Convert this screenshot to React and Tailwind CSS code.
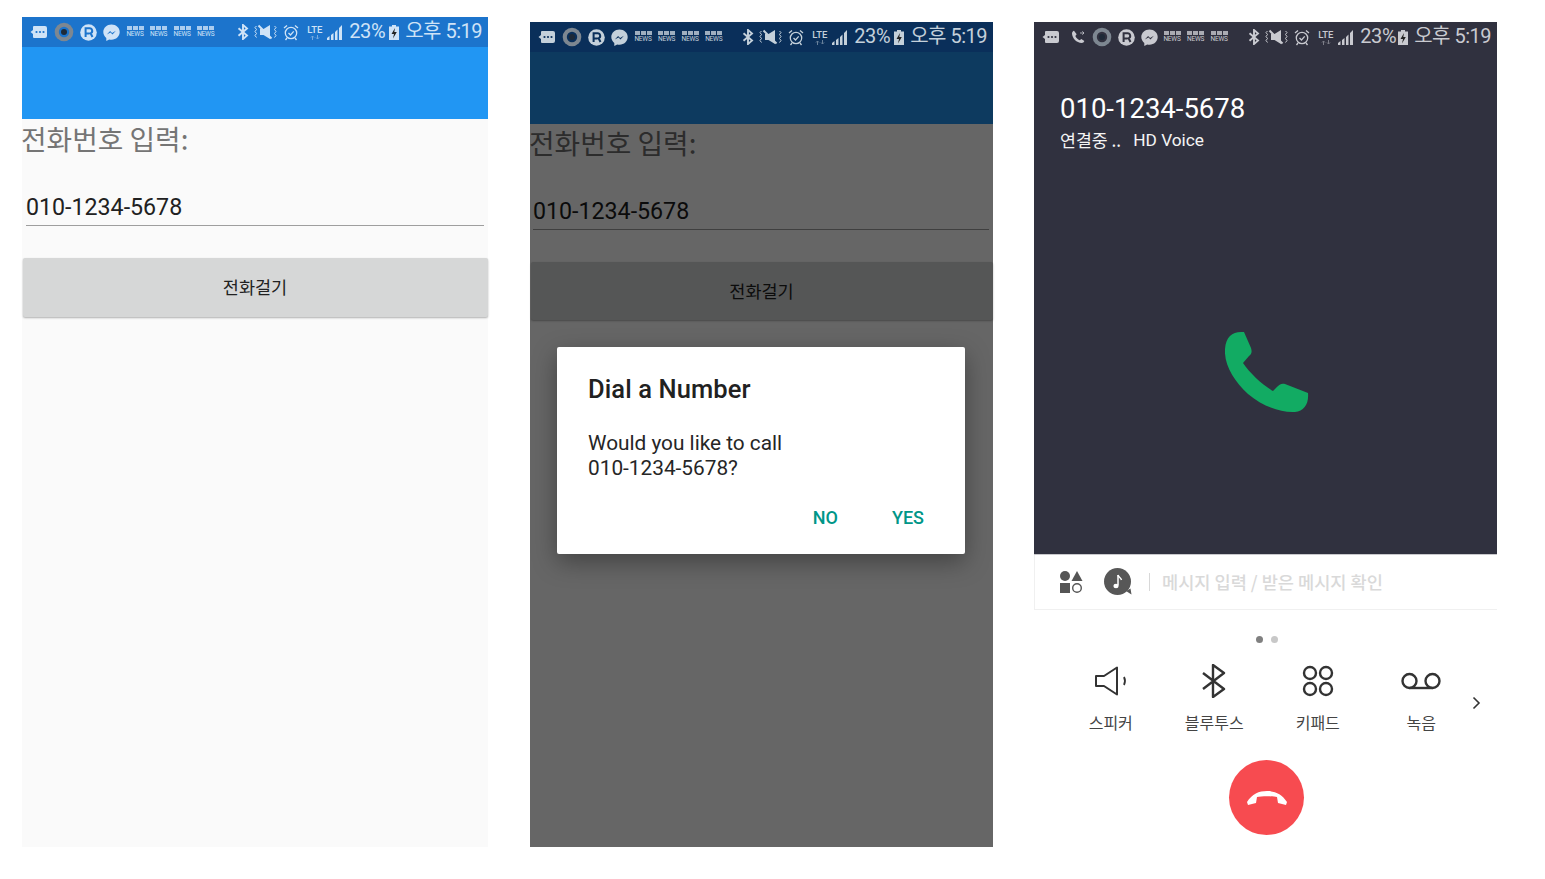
import React from "react";

const F = "font-['Roboto','Noto_Sans_CJK_KR',sans-serif]";
const K = "font-['Noto_Sans_CJK_KR','Roboto',sans-serif]";

function Bbc({ c }) {
  return (
    <div className="flex flex-col items-center w-[18px] leading-none shrink-0" style={{ color: c }}>
      <div className="flex gap-[1px]">
        <span className="w-[5px] h-[4px] bg-current opacity-80" />
        <span className="w-[5px] h-[4px] bg-current opacity-80" />
        <span className="w-[5px] h-[4px] bg-current opacity-80" />
      </div>
      <span className={`${F} text-[6.5px] leading-[7px] mt-[1px] tracking-[-0.2px]`}>NEWS</span>
    </div>
  );
}

function Chat({ c, bg }) {
  return (
    <svg width="18" height="14" viewBox="0 0 18 14" className="shrink-0">
      <path d="M4 1h11a2 2 0 0 1 2 2v8a2 2 0 0 1-2 2H4a1 1 0 0 1-1-1V9L.5 7 3 5V2a1 1 0 0 1 1-1z" fill={c} />
      <circle cx="6.5" cy="7" r="1.1" fill={bg} />
      <circle cx="10" cy="7" r="1.1" fill={bg} />
      <circle cx="13.5" cy="7" r="1.1" fill={bg} />
    </svg>
  );
}

function Rec({ bg }) {
  return (
    <svg width="20" height="20" viewBox="0 0 20 20" className="shrink-0">
      <circle cx="10" cy="10" r="9.3" fill="#7d8791" />
      <circle cx="10" cy="10" r="5.2" fill={bg} />
      <circle cx="10" cy="10" r="3" fill="#1e2a38" />
    </svg>
  );
}

function RIcon({ c, bg }) {
  return (
    <svg width="17" height="17" viewBox="0 0 17 17" className="shrink-0">
      <circle cx="8.5" cy="8.5" r="8.3" fill={c} />
      <path d="M5.6 13V4.3h4a2.6 2.6 0 0 1 1 5l1.9 3.7M5.6 9.4h4" fill="none" stroke={bg} strokeWidth="2" />
    </svg>
  );
}

function Messenger({ c, bg }) {
  return (
    <svg width="17" height="17" viewBox="0 0 17 17" className="shrink-0">
      <path d="M8.5.4C3.9.4.3 3.8.3 8c0 2.400 1.200 4.500 3 5.900V17l2.900-1.600c.7.2 1.500.3 2.300.3 4.600 0 8.200-3.400 8.200-7.700S13.100.4 8.500.4z" fill={c} />
      <path d="M3.800 10.500l3.300-3.600 2 2 3.800-2.100-3.400 3.700-2-2.100z" fill={bg} />
    </svg>
  );
}

function BluetoothSmall({ c }) {
  return (
    <svg width="12" height="16" viewBox="0 0 12 16" className="shrink-0">
      <path d="M1.500 4.300l8.500 7.300L6 15V1l4 3.400L1.500 11.800" fill="none" stroke={c} strokeWidth="1.900" />
    </svg>
  );
}

function Mute({ c }) {
  return (
    <svg width="23" height="16" viewBox="0 0 23 16" className="shrink-0">
      <path d="M6 5h3.500L16 1v14L9.500 11H6z" fill={c} />
      <path d="M4.500 1.500L17.500 14.500" stroke={c} strokeWidth="2" />
      <path d="M2.500 2L1 3.500l1.500 2L1 7.500l1.500 2L1 11.500l1.500 2M20.500 2L22 3.500l-1.500 2 1.500 2-1.500 2 1.500 2-1.500 2" fill="none" stroke={c} strokeWidth="1" />
    </svg>
  );
}

function Alarm({ c }) {
  return (
    <svg width="16" height="17" viewBox="0 0 16 17" className="shrink-0">
      <circle cx="8" cy="9" r="5.700" fill="none" stroke={c} strokeWidth="1.300" />
      <path d="M5.500 9l2 2 3.200-3.600" fill="none" stroke={c} strokeWidth="1.300" />
      <path d="M1 4l3-2.600M15 4l-3-2.600M4 14l-1.500 2M12 14l1.500 2" stroke={c} strokeWidth="1.300" fill="none" />
    </svg>
  );
}

function Lte({ c }) {
  return (
    <div className="flex flex-col items-center w-[17px] shrink-0" style={{ color: c }}>
      <span className={`${F} text-[9.5px] leading-[10px] font-medium`}>LTE</span>
      <svg width="10" height="5" viewBox="0 0 10 5" className="opacity-50">
        <path d="M2.500 5V1M1 2.500L2.500 1 4 2.500M7.500 0v4M6 2.500L7.500 4 9 2.500" fill="none" stroke={c} strokeWidth="1" />
      </svg>
    </div>
  );
}

function Signal({ c }) {
  return (
    <svg width="16" height="16" viewBox="0 0 16 16" className="shrink-0">
      <path d="M0 16v-2l2.500-2v4zM4 16v-5l2.500-2v7zM8 16V8l2.500-2.500V16zM12 16V4l3-3v15z" fill={c} />
    </svg>
  );
}

function Battery({ c }) {
  return (
    <svg width="10" height="15" viewBox="0 0 10 15" className="shrink-0">
      <rect x="3" y="0" width="4" height="2" fill={c} />
      <rect x="0" y="1.500" width="10" height="13.500" fill={c} />
      <path d="M6 3L2.500 9H5l-1 4.500L7.800 7H5.300z" fill="#222" />
    </svg>
  );
}

function StatusBar({ bg, fg, call, bbc }) {
  return (
    <div className="h-[30px] flex items-center shrink-0" style={{ background: bg }}>
      <div className="ml-[8px] flex items-center gap-[6px]">
        <Chat c={fg} bg={bg} />
        {call && (
          <svg width="16" height="16" viewBox="0 0 24 24" className="ml-[4px] shrink-0">
            <path d="M6 2.500c-1.500.5-3 2-3 4 0 7.500 7 14.500 14.500 14.500 2 0 3.500-1.500 4-3l-4.500-3-2.500 2c-3-1.500-5-3.500-6.500-6.500l2-2.500z" fill={fg} />
            <path d="M15 6h6M18.500 3.500L21 6l-2.500 2.500" fill="none" stroke={fg} strokeWidth="1.200" />
          </svg>
        )}
        <Rec bg={bg} />
        <RIcon c={fg} bg={bg} />
        <Messenger c={fg} bg={bg} />
      </div>
      <div className={`${call ? "ml-[5px]" : "ml-[6px]"} flex items-center gap-[5.600px]`}>
        {Array.from({ length: bbc }).map((_, i) => (
          <Bbc key={i} c={fg} />
        ))}
      </div>
      <div className="ml-auto mr-[6px] flex items-center">
        <BluetoothSmall c={fg} />
        <span className="ml-[5px]"><Mute c={fg} /></span>
        <span className="ml-[6px]"><Alarm c={fg} /></span>
        <span className="ml-[7px]"><Lte c={fg} /></span>
        <span className="ml-[4px]"><Signal c={fg} /></span>
        <span className={`${F} ml-[6px] pb-[2px] text-[20px] leading-none tracking-[-0.4px]`} style={{ color: fg }}>23%</span>
        <span className={call ? "ml-[2px]" : "ml-[4px]"}><Battery c={fg} /></span>
        <span className={`${F} text-[20px] pb-[2px] leading-none ml-[6px] tracking-[-0.5px]`} style={{ color: fg }}>오후 5:19</span>
      </div>
    </div>
  );
}

function FormContent({ dim }) {
  return (
    <div className={`flex flex-col flex-1 ${dim ? "-mt-[1px]" : ""}`}>
      <div className={`h-[37px] flex items-center text-[27.800px] leading-none ${K}`} style={{ color: dim ? "#2c2c2c" : "#757575" }}>
        <span className="-ml-[1px] mt-[3px]">전화번호 입력:</span>
      </div>
      <div
        className={`${dim ? "ml-[3px]" : "ml-[4px]"} mr-[4px] mt-[31px] h-[39px] flex items-center border-b-[1.500px]`}
        style={{ borderColor: dim ? "#3f3f3f" : "#9e9e9e" }}
      >
        <span className={`${F} text-[23.200px] leading-none pt-[3px]`} style={{ color: dim ? "#0b0b0b" : "#212121" }}>010-1234-5678</span>
      </div>
      <div
        className={`mt-[32px] mx-[0.500px] ${dim ? "h-[58px]" : "h-[59px]"} rounded-[2px] flex items-center justify-center text-[17.500px] ${K}`}
        style={{
          background: dim ? "#555656" : "#d6d7d7",
          color: dim ? "#0c0c0c" : "#212121",
          boxShadow: "0 1px 2px rgba(0,0,0,.3)",
        }}
      >
        전화걸기
      </div>
    </div>
  );
}

function IconBtn({ label, children }) {
  return (
    <div className="w-[103.500px] flex flex-col items-center">
      <div className="h-[38px] flex items-center justify-center">{children}</div>
      <span className={`${K} mt-[12px] text-[16px] leading-[20px] text-[#444]`}>{label}</span>
    </div>
  );
}

export default function App() {
  return (
    <div className="w-[1545px] h-[879px] bg-white flex items-end pb-[32px] pl-[22px] overflow-hidden">
      {/* Panel 1 */}
      <div className="w-[466px] h-[830px] bg-[#fafafa] flex flex-col">
        <StatusBar bg="#1c74cc" fg="#cfe3f7" bbc={4} />
        <div className="h-[72px] bg-[#2196f3] shrink-0" />
        <FormContent />
      </div>

      {/* Panel 2 */}
      <div className="relative ml-[42px] w-[463px] h-[825px] bg-[#666666] flex flex-col">
        <StatusBar bg="#0a2f5a" fg="#c4d0da" bbc={4} />
        <div className="h-[72px] bg-[#0d3a5f] shrink-0 relative z-10" />
        <FormContent dim />
        <div className="absolute z-20 left-[27px] top-[325px] w-[408px] h-[207px] bg-white rounded-[2px] shadow-[0_8px_24px_rgba(0,0,0,0.35)]">
          <div className={`${F} pl-[31px] pt-[27px] text-[25.500px] leading-[30px] font-medium text-[#212121] tracking-[0.1px]`}>Dial a Number</div>
          <div className={`${F} pl-[31px] pt-[27px] text-[20.800px] leading-[25px] text-[#262626]`}>
            <div>Would you like to call</div>
            <div>010-1234-5678?</div>
          </div>
          <div className={`${F} flex justify-end gap-[54px] pr-[41px] pt-[25px] text-[18px] leading-[24px] font-medium text-[#009688]`}>
            <span>NO</span>
            <span>YES</span>
          </div>
        </div>
      </div>

      {/* Panel 3 */}
      <div className="ml-[41px] w-[463px] h-[825px] bg-white flex flex-col">
        <StatusBar bg="#30313f" fg="#c9cad0" bbc={3} call />
        <div className="h-[503px] bg-[#30313f] flex flex-col border-b border-[#c8c8cc] shrink-0">
          <div className={`${F} pl-[26px] pt-[38px] text-[27.500px] leading-[38px] text-white`}>010-1234-5678</div>
          <div className="pl-[26px] text-[17.300px] leading-[24px] text-[#f4f4f4] flex">
            <span className={K}>연결중 ..</span>
            <span className={`${F} ml-[12px]`}>HD Voice</span>
          </div>
          <div className="flex-1 flex items-center justify-center pt-[38px] pl-[2px]">
            <svg width="84" height="82" viewBox="0 0 84 82">
              <path
                d="M16 1 C7 1 1 6 0 18 C-1 34 9 50 23 63 C37 75 56 82 70 81 C79 80 84 73 83 62 L60 53 C57 52 54 53 50 58 L48 60 C36 53 25 42 18 32 L24 25 C27 23 27 20 26 17 L19 1 Z"
                fill="#12ab63"
              />
            </svg>
          </div>
        </div>
        <div className="h-[55px] flex items-center border-b border-l border-[#f0f0f0] shrink-0">
          <svg width="24" height="24" viewBox="0 0 24 24" className="ml-[24px] shrink-0">
            <circle cx="6" cy="6" r="5" fill="#555" />
            <path d="M12.500 11L18 1l5.500 10z" fill="#555" />
            <rect x="1" y="13" width="10" height="10" fill="#555" />
            <circle cx="18" cy="18" r="4.300" fill="none" stroke="#555" strokeWidth="1.400" />
          </svg>
          <svg width="28" height="28" viewBox="0 0 28 28" className="ml-[21px] shrink-0">
            <circle cx="13.500" cy="13.500" r="13.500" fill="#575757" />
            <path d="M22 23l5.500 3.500-1-6z" fill="#575757" />
            <path d="M14 7v10.500" stroke="#fff" strokeWidth="1.500" />
            <ellipse cx="12" cy="18" rx="2.600" ry="2.200" fill="#fff" />
            <path d="M14 7c.5 2.500 3 2.500 3.500 5" fill="none" stroke="#fff" strokeWidth="1.500" />
          </svg>
          <span className="ml-[17px] h-[18px] w-[1px] bg-[#d8d8d8]" />
          <span className={`${K} ml-[12px] text-[17.600px] font-medium text-[#d9d9d9]`}>메시지 입력 / 받은 메시지 확인</span>
        </div>
        <div className="flex justify-center gap-[8px] pt-[26px] pl-[2px]">
          <span className="w-[7px] h-[7px] rounded-full bg-[#808080]" />
          <span className="w-[7px] h-[7px] rounded-full bg-[#c8c8c8]" />
        </div>
        <div className="relative flex pl-[25px] pt-[19px]">
          <IconBtn label="스피커">
            <svg width="34" height="30" viewBox="0 0 34 30" className="ml-[3px]">
              <path d="M1 10h8l13-8.500v27L9 20H1z" fill="none" stroke="#333" strokeWidth="2" strokeLinejoin="round" />
              <path d="M29 11c1.500 3 1.500 5 0 8" fill="none" stroke="#333" strokeWidth="1.800" />
            </svg>
          </IconBtn>
          <IconBtn label="블루투스">
            <svg width="26" height="34" viewBox="0 0 26 34">
              <path d="M2 9l21 16-11 8V1l11 8L2 25" fill="none" stroke="#333" strokeWidth="2.400" strokeLinejoin="round" />
            </svg>
          </IconBtn>
          <IconBtn label="키패드">
            <svg width="32" height="32" viewBox="0 0 32 32">
              <circle cx="8" cy="8" r="6" fill="none" stroke="#333" strokeWidth="2.400" />
              <circle cx="24" cy="8" r="6" fill="none" stroke="#333" strokeWidth="2.400" />
              <circle cx="8" cy="24" r="6" fill="none" stroke="#333" strokeWidth="2.400" />
              <circle cx="24" cy="24" r="6" fill="none" stroke="#333" strokeWidth="2.400" />
            </svg>
          </IconBtn>
          <IconBtn label="녹음">
            <svg width="40" height="18" viewBox="0 0 40 18">
              <circle cx="8.500" cy="9" r="7" fill="none" stroke="#333" strokeWidth="2.400" />
              <circle cx="31.500" cy="9" r="7" fill="none" stroke="#333" strokeWidth="2.400" />
              <path d="M8.500 16h23" stroke="#333" strokeWidth="2.400" />
            </svg>
          </IconBtn>
          <svg width="9" height="14" viewBox="0 0 9 14" className="absolute left-[438px] top-[53px]">
            <path d="M1.500 1.500L7 7l-5.500 5.500" fill="none" stroke="#333" strokeWidth="1.600" />
          </svg>
        </div>
        <div className="flex justify-center pt-[28px] pl-[2px]">
          <div className="w-[75px] h-[75px] rounded-full bg-[#f74b50] flex items-center justify-center">
            <svg width="42" height="16" viewBox="0 0 42 16">
              <path d="M1 12C6 4 13 1 21 1s15 3 20 11l-1 3-8-2-1-6c-4-1-16-1-20 0l-1 6-8 2z" fill="#fff" />
            </svg>
          </div>
        </div>
      </div>
    </div>
  );
}
